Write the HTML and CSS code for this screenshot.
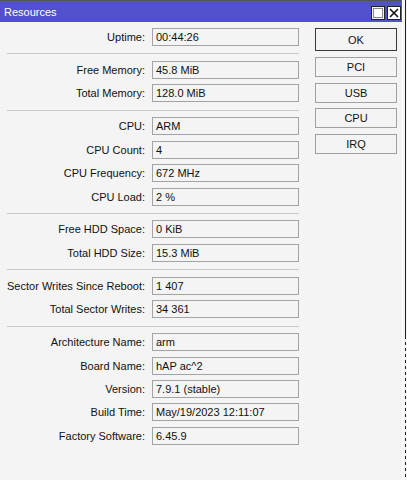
FILE: index.html
```html
<!DOCTYPE html>
<html lang="en">
<head>
    <meta charset="UTF-8">
    <meta name="viewport" content="width=device-width, initial-scale=1.0">
    <title>Resources</title>
    <link rel="stylesheet" href="styles.css">
</head>
<body>
    <div class="window">
        <div class="titlebar">
            <span class="title">Resources</span>
            <div class="tb-buttons">
                <svg class="tb-btn" width="14" height="14" viewBox="0 0 14 14">
                    <rect x="0.5" y="0.5" width="13" height="13" fill="#f2f2f2" stroke="#222"/>
                    <rect x="2.5" y="2.5" width="9" height="9" fill="#fff" stroke="#8a8a8a"/>
                </svg>
                <svg class="tb-btn" width="14" height="14" viewBox="0 0 14 14">
                    <rect x="0.5" y="0.5" width="13" height="13" fill="#fff" stroke="#222"/>
                    <path d="M3 3 L11 11 M11 3 L3 11" stroke="#111" stroke-width="1.6"/>
                </svg>
            </div>
        </div>

        <div class="content">
            <div class="form">
                <div class="row"><label>Uptime:</label><div class="field">00:44:26</div></div>
                <div class="sep"></div>
                <div class="row"><label>Free Memory:</label><div class="field">45.8 MiB</div></div>
                <div class="row"><label>Total Memory:</label><div class="field">128.0 MiB</div></div>
                <div class="sep"></div>
                <div class="row"><label>CPU:</label><div class="field">ARM</div></div>
                <div class="row"><label>CPU Count:</label><div class="field">4</div></div>
                <div class="row"><label>CPU Frequency:</label><div class="field">672 MHz</div></div>
                <div class="row"><label>CPU Load:</label><div class="field">2 %</div></div>
                <div class="sep"></div>
                <div class="row"><label>Free HDD Space:</label><div class="field">0 KiB</div></div>
                <div class="row"><label>Total HDD Size:</label><div class="field">15.3 MiB</div></div>
                <div class="sep"></div>
                <div class="row"><label>Sector Writes Since Reboot:</label><div class="field">1 407</div></div>
                <div class="row"><label>Total Sector Writes:</label><div class="field">34 361</div></div>
                <div class="sep"></div>
                <div class="row"><label>Architecture Name:</label><div class="field">arm</div></div>
                <div class="row"><label>Board Name:</label><div class="field">hAP ac^2</div></div>
                <div class="row"><label>Version:</label><div class="field">7.9.1 (stable)</div></div>
                <div class="row"><label>Build Time:</label><div class="field">May/19/2023 12:11:07</div></div>
                <div class="row"><label>Factory Software:</label><div class="field">6.45.9</div></div>
            </div>

            <div class="actions">
                <button class="btn default">OK</button>
                <button class="btn">PCI</button>
                <button class="btn">USB</button>
                <button class="btn">CPU</button>
                <button class="btn">IRQ</button>
            </div>
        </div>
    </div>
    <div class="edge">
        <div class="edge-solid"></div>
        <div class="edge-dashed"></div>
    </div>
</body>
</html>
```

FILE: styles.css
```css
html, body {
    height: 100%;
}
body {
    margin: 0;
    display: flex;
    background-color: #f4f4f4;
    font-family: "Liberation Sans", Arial, sans-serif;
    font-size: 11px;
    color: #111;
    overflow: hidden;
}
.window {
    width: 402px;
    border-right: 1px solid #fff;
}
.titlebar {
    height: 21px;
    border-top: 1px solid #555;
    background-color: #5151cb;
    display: flex;
    align-items: center;
    justify-content: space-between;
    padding: 0 1px 0 4px;
}
.title {
    color: #fff;
    font-size: 11px;
}
.tb-buttons {
    display: flex;
    gap: 2px;
    padding-top: 2px;
}
.tb-btn {
    display: block;
}
.content {
    display: flex;
    padding: 6px 0 0 7px;
}
.form {
    width: 292px;
    display: flex;
    flex-direction: column;
    gap: 5.4px;
}
.row {
    display: grid;
    grid-template-columns: 138px 147px;
    column-gap: 7px;
    align-items: center;
}
.row label {
    text-align: right;
    white-space: nowrap;
}
.field {
    height: 18px;
    box-sizing: border-box;
    border: 1px solid #a3a3a3;
    padding: 0 3px;
    line-height: 16px;
    white-space: nowrap;
}
.sep {
    height: 1px;
    background-color: #c9c9c9;
    margin: 2px 0 1.2px;
}
.actions {
    margin-left: 16px;
    width: 82px;
    display: flex;
    flex-direction: column;
    gap: 5.4px;
}
.btn {
    height: 20px;
    padding: 0;
    font-family: inherit;
    font-size: 11px;
    color: #111;
    background-color: #f4f4f4;
    border: 1px solid #a0a0a0;
    border-radius: 0;
}
.btn.default {
    height: 23px;
    border-color: #3a3a3a;
    margin-bottom: 1px;
}
.edge {
    width: 1px;
    margin-left: 2px;
    display: flex;
    flex-direction: column;
}
.edge-solid {
    height: 336px;
    background-color: #222;
}
.edge-dashed {
    flex: 1;
    background: repeating-linear-gradient(#222 0 3px, transparent 3px 6px);
}
```
